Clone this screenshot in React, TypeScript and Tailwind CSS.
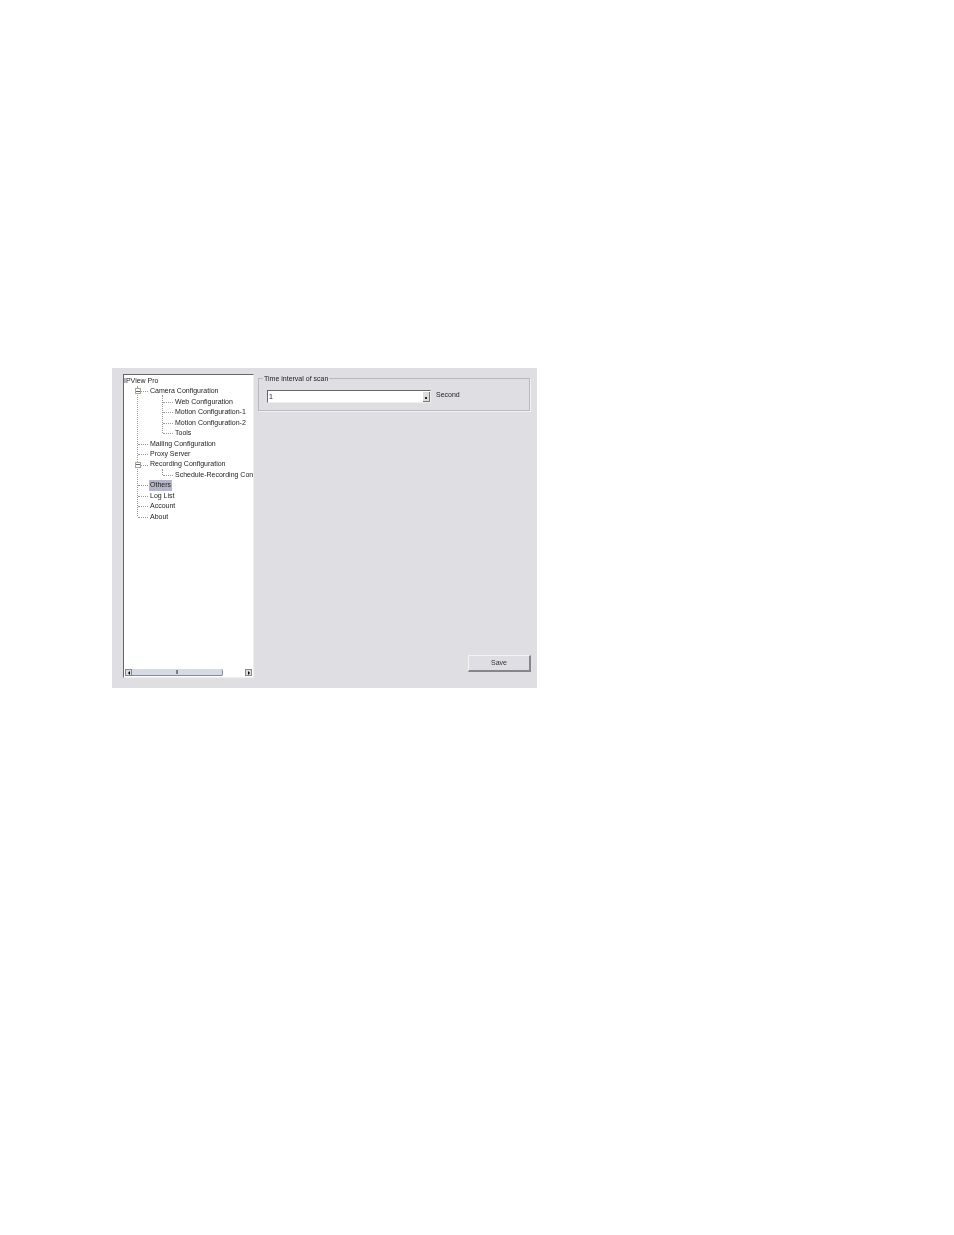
const TREE = [
  { label: "IPView Pro", level: 0 },
  { label: "Camera Configuration", level: 1, expand: true },
  { label: "Web Configuration", level: 2 },
  { label: "Motion Configuration-1", level: 2 },
  { label: "Motion Configuration-2", level: 2 },
  { label: "Tools", level: 2 },
  { label: "Mailing Configuration", level: 1 },
  { label: "Proxy Server", level: 1 },
  { label: "Recording Configuration", level: 1, expand: true },
  { label: "Schedule-Recording Configuration", level: 2 },
  { label: "Others", level: 1, selected: true },
  { label: "Log List", level: 1 },
  { label: "Account", level: 1 },
  { label: "About", level: 1 },
];

function TreeRow({ label, level, expand, selected }: { label: string; level: number; expand?: boolean; selected?: boolean }) {
  return (
    <div className="relative h-[10.45px] flex items-center whitespace-nowrap">
      {level === 1 && (
        <div className="absolute left-[15px] top-[5px] w-[10px] border-t border-dotted border-[#999]" />
      )}
      {level === 2 && (
        <div className="absolute left-[40px] top-[5px] w-[10px] border-t border-dotted border-[#999]" />
      )}
      {expand && (
        <div className="absolute left-[12px] top-[2px] w-[6px] h-[6px] border border-[#a5a598] bg-white flex items-center justify-center">
          <div className="w-[4px] h-px bg-[#666]" />
        </div>
      )}
      <span
        className={
          level === 0
            ? "ml-[1px]"
            : level === 1
              ? selected
                ? "ml-[26px] px-px bg-[#b4b6c8]"
                : "ml-[27px]"
              : "ml-[52px]"
        }
      >
        {label}
      </span>
    </div>
  );
}

export default function App() {
  return (
    <div className="w-[954px] h-[1235px] bg-white pl-[112px] pt-[368px] font-['Liberation_Sans',sans-serif] text-[7px] text-[#1c1c1c] overflow-hidden">
      <div className="w-[425px] h-[320px] bg-[#dfdfe3] flex pl-[11px] pt-[6px] blur-[0.25px]">
        {/* tree panel */}
        <div className="w-[131px] h-[304px] bg-white border border-l-[#666] border-t-[#666] border-r-[#eee] border-b-[#eee] flex flex-col relative">
          <div className="flex-1 overflow-hidden relative pt-px">
            <div className="absolute left-[13px] top-[11px] h-[130px] border-l border-dotted border-[#999]" />
            <div className="absolute left-[38px] top-[20px] h-[38px] border-l border-dotted border-[#999]" />
            <div className="absolute left-[38px] top-[94px] h-[6px] border-l border-dotted border-[#999]" />
            <div className="-ml-px relative">
              {TREE.map((row) => (
                <TreeRow key={row.label} {...row} />
              ))}
            </div>
          </div>
          {/* horizontal scrollbar */}
          <div className="h-[9px] flex items-center justify-between px-px">
            <div className="w-[7px] h-[7px] bg-[#dcdce0] border border-[#888] flex items-center justify-center">
              <div className="w-0 h-0 border-y-[2px] border-y-transparent border-r-[2px] border-r-black" />
            </div>
            <div className="flex-1 h-[7px] flex">
              <div className="w-[91px] h-[7px] bg-[#d5dbe6] border-r border-b border-[#8a8a98] rounded-r-[2px] flex items-center justify-center">
                <div className="w-[2px] h-[4px] border-x border-[#7c7c88]" />
              </div>
            </div>
            <div className="w-[7px] h-[7px] bg-[#dcdce0] border border-[#888] flex items-center justify-center">
              <div className="w-0 h-0 border-y-[2px] border-y-transparent border-l-[2px] border-l-black" />
            </div>
          </div>
        </div>
        {/* right side */}
        <div className="ml-[4px] w-[272px] flex flex-col">
          <fieldset className="h-[37px] border border-[#b9b9bd] shadow-[1px_1px_0_#f2f2f4] px-[8px]">
            <legend className="ml-[-4px] px-[1px] leading-[9px]">Time interval of scan</legend>
            <div className="flex items-center mt-[7px]">
              <div className="w-[164px] h-[13px] bg-white border border-l-[#666] border-t-[#666] border-r-[#eee] border-b-[#eee] flex items-center justify-between pl-px">
                <span className="pt-px">1</span>
                <div className="w-[7px] h-[10px] bg-[#dcdce0] border-r border-b border-[#777] flex items-end justify-center pb-[2px]">
                  <div className="w-[2px] h-[2px] bg-[#222]" />
                </div>
              </div>
              <span className="ml-[5px] -mt-[3px]">Second</span>
            </div>
          </fieldset>
          <div className="flex-1" />
          <div className="flex justify-end mb-[16px] -mr-[1px]">
            <button className="w-[63px] h-[17px] pt-px bg-[#dfdfe3] border border-[#f4f4ee] border-r-2 border-b-2 border-r-[#85858d] border-b-[#85858d] text-[7px] text-[#333]">
              Save
            </button>
          </div>
        </div>
      </div>
    </div>
  );
}
